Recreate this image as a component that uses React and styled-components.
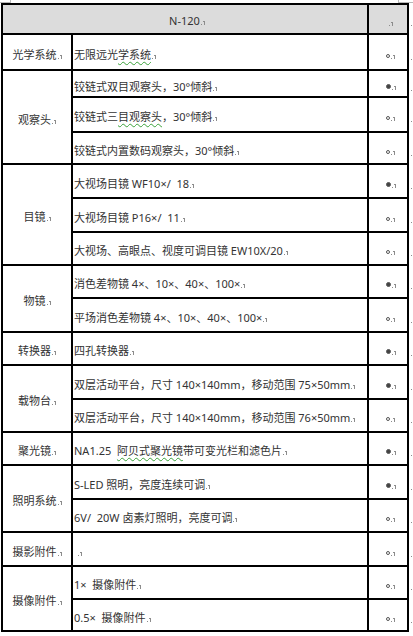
import React from 'react';
import styled, { createGlobalStyle, css } from 'styled-components';

const GlobalStyle = createGlobalStyle`
  html, body {
    margin: 0;
    padding: 0;
    background: #fff;
    overflow: hidden;
  }
`;

const colors = {
  text: '#333',
  line: '#000',
  header: '#dcdcdc',
  mark: '#8c8c8c',
  corner: '#b8b8b8',
  squiggle: '#3aa23a',
};

const Page = styled.div`
  position: relative;
  width: 413px;
  height: 636px;
  padding: 3px 0 0 1px;
  box-sizing: border-box;
  font-family: "Noto Sans", "Noto Sans CJK SC", "Microsoft YaHei", sans-serif;
  font-size: 11px;
  color: ${colors.text};
`;

const Corner = styled.span`
  position: absolute;
  top: 0;
  height: 2px;
  border-bottom: 1px solid ${colors.corner};
  ${p => p.$side === 'left' ? css`
    left: 0;
    width: 10px;
    border-right: 1px solid ${colors.corner};
  ` : css`
    left: 398px;
    width: 15px;
    border-left: 1px solid ${colors.corner};
  `}
`;

const Grid = styled.div`
  display: grid;
  grid-template-columns: 72px 296px 40px 4px;
  grid-template-rows: ${p => p.$rows};
`;

const Cell = styled.div`
  box-sizing: border-box;
  display: flex;
  align-items: center;
  grid-row: ${p => p.$row} / span ${p => p.$span || 1};
  grid-column: ${p => p.$col} / span ${p => p.$colSpan || 1};
  border-right: 2px solid ${colors.line};
  border-bottom: 2px solid ${colors.line};
  ${p => p.$top && css`border-top: 2px solid ${colors.line};`}
  ${p => p.$head && css`background: ${colors.header};`}
  white-space: pre;
  overflow: hidden;
`;

const LabelCell = styled(Cell)`
  justify-content: center;
  border-left: 2px solid ${colors.line};
  padding-top: 4px;
`;

const TextCell = styled(Cell)`
  padding: ${p => p.$pad || 4}px 0 0 1px;
`;

const HeadTitle = styled(Cell)`
  justify-content: center;
  border-left: 2px solid ${colors.line};
  padding: 3px 0 0 4px;
`;

const DotCell = styled(Cell)`
  justify-content: center;
  padding: 4px 0 0 5px;
`;

const EdgeCell = styled.div`
  grid-row: ${p => p.$row};
  grid-column: 4;
  display: flex;
  align-items: center;
  padding: 4px 0 0 1px;
  overflow: hidden;
`;

const Line = styled.span`
  display: inline-block;
  line-height: 15px;
`;

const Squiggle = styled.span`
  text-decoration: underline wavy ${colors.squiggle};
  text-decoration-thickness: 1px;
  text-underline-offset: 2px;
`;

/* Word's paragraph mark, drawn as a dot plus a small hooked stroke */
const Mark = styled.span`
  position: relative;
  display: inline-block;
  width: 4px;
  height: 5px;
  margin-left: 1px;
  vertical-align: baseline;

  &::before {
    content: "";
    position: absolute;
    left: 0;
    bottom: 0;
    width: 1px;
    height: 1px;
    background: ${colors.mark};
  }

  &::after {
    content: "";
    position: absolute;
    right: 0;
    bottom: 0;
    width: 1px;
    height: 3px;
    border-top: 1px solid ${colors.mark};
    border-right: 1px solid ${colors.mark};
  }
`;

const Dot = styled.span`
  display: inline-block;
  width: ${p => p.$filled ? 5 : 4}px;
  height: ${p => p.$filled ? 5 : 4}px;
  box-sizing: border-box;
  border-radius: 50%;
  border: 1px solid #555;
  background: ${p => p.$filled ? '#444' : 'transparent'};
  vertical-align: 1px;
`;

const groups = [
  { label: '光学系统', items: [
    { text: ['无限远光', { u: '学系统' }], on: false, h: 36 },
  ] },
  { label: '观察头', items: [
    { text: '铰链式双目观察头，30°倾斜', on: true, h: 27, pad: 6 },
    { text: ['铰链式三', { u: '目观察头' }, '，30°倾斜'], on: false, h: 35 },
    { text: '铰链式内置数码观察头，30°倾斜', on: false, h: 32 },
  ] },
  { label: '目镜', items: [
    { text: '大视场目镜 WF10×/  18', on: true, h: 34 },
    { text: '大视场目镜 P16×/  11', on: false, h: 34 },
    { text: '大视场、高眼点、视度可调目镜 EW10X/20', on: false, h: 33 },
  ] },
  { label: '物镜', items: [
    { text: '消色差物镜 4×、10×、40×、100×', on: true, h: 33 },
    { text: '平场消色差物镜 4×、10×、40×、100×', on: false, h: 34 },
  ] },
  { label: '转换器', items: [
    { text: '四孔转换器', on: true, h: 33 },
  ] },
  { label: '载物台', items: [
    { text: '双层活动平台，尺寸 140×140mm，移动范围 75×50mm', on: true, h: 34 },
    { text: '双层活动平台，尺寸 140×140mm，移动范围 76×50mm', on: false, h: 33 },
  ] },
  { label: '聚光镜', items: [
    { text: ['NA1.25  ', { u: '阿贝式聚光镜' }, '带可变光栏和滤色片'], on: true, h: 33 },
  ] },
  { label: '照明系统', items: [
    { text: 'S-LED 照明，亮度连续可调', on: true, h: 34 },
    { text: '6V/  20W 卤素灯照明，亮度可调', on: false, h: 33 },
  ] },
  { label: '摄影附件', items: [
    { text: ' ', on: false, h: 34 },
  ] },
  { label: '摄像附件', items: [
    { text: '1×  摄像附件', on: false, h: 33 },
    { text: '0.5×  摄像附件', on: false, h: 32 },
  ] },
];

function renderText (text) {
  const parts = Array.isArray(text) ? text : [text];
  return parts.map((part, i) => (
    typeof part === 'string'
      ? <React.Fragment key={i}>{part}</React.Fragment>
      : <Squiggle key={i}>{part.u}</Squiggle>
  ));
}

export default function App () {
  const heights = [32];
  groups.forEach(g => g.items.forEach(item => heights.push(item.h)));
  const rowsTemplate = heights.map(h => `${h}px`).join(' ');

  const cells = [];
  let row = 2;
  groups.forEach((group, gi) => {
    cells.push(
      <LabelCell key={`l${gi}`} $row={row} $span={group.items.length} $col={1}>
        <Line>{group.label}<Mark /></Line>
      </LabelCell>
    );
    group.items.forEach((item, ii) => {
      const r = row + ii;
      cells.push(
        <TextCell key={`t${gi}-${ii}`} $row={r} $col={2} $pad={item.pad}>
          <Line>{renderText(item.text)}<Mark /></Line>
        </TextCell>,
        <DotCell key={`d${gi}-${ii}`} $row={r} $col={3}>
          <Line><Dot $filled={item.on} /><Mark /></Line>
        </DotCell>,
        <EdgeCell key={`e${gi}-${ii}`} $row={r}>
          <Line><Mark /></Line>
        </EdgeCell>
      );
    });
    row += group.items.length;
  });

  return (
    <Page>
      <GlobalStyle />
      <Corner $side="left" />
      <Corner $side="right" />
      <Grid $rows={rowsTemplate}>
        <HeadTitle $row={1} $col={1} $colSpan={2} $top $head>
          <Line>N-120<Mark /></Line>
        </HeadTitle>
        <DotCell $row={1} $col={3} $top $head>
          <Line><Mark /></Line>
        </DotCell>
        <EdgeCell $row={1}>
          <Line><Mark /></Line>
        </EdgeCell>
        {cells}
      </Grid>
    </Page>
  );
}
